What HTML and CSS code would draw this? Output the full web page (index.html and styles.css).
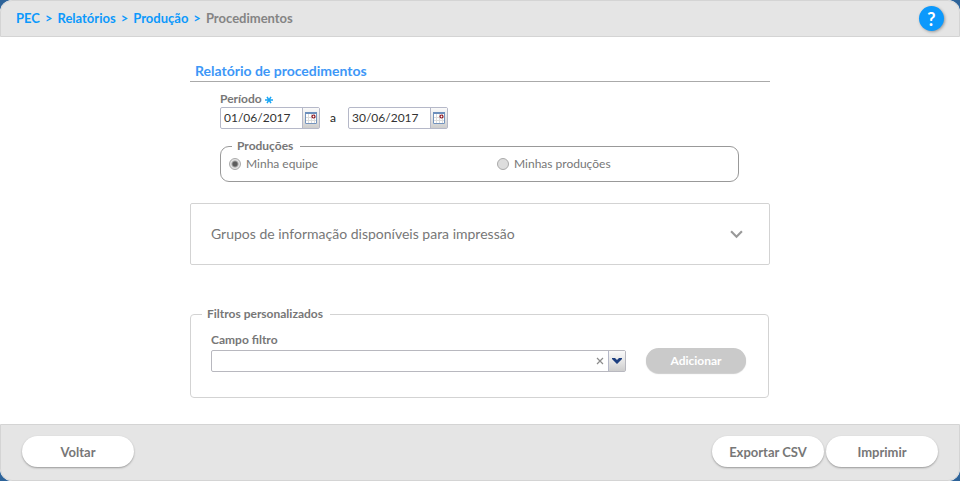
FILE: index.html
```html
<!DOCTYPE html>
<html lang="pt-BR">
<head>
<meta charset="utf-8">
<meta name="viewport" content="width=device-width, initial-scale=1">
<title>Relatório de procedimentos</title>
<link rel="stylesheet" href="styles.css">
</head>
<body>
<div class="window">
  <header class="topbar">
    <nav class="breadcrumb" aria-label="Navegação">
      <a href="#">PEC</a><span class="sep">&gt;</span><a href="#">Relatórios</a><span class="sep">&gt;</span><a href="#">Produção</a><span class="sep">&gt;</span><span class="current">Procedimentos</span>
    </nav>
    <button class="help" type="button" aria-label="Ajuda">?</button>
  </header>

  <main class="content">
    <h1 class="title">Relatório de procedimentos</h1>

    <section class="params">
      <label class="label" for="start">Período
        <svg class="required" viewBox="0 0 8 8" aria-hidden="true"><path d="M0 4h8M2 .8l4 6.400M6 .8L2 7.200"/></svg>
      </label>
      <div class="period">
        <div class="date">
          <input id="start" type="text" value="01/06/2017">
          <button type="button" aria-label="Abrir calendário inicial">
            <svg viewBox="0 0 14 14" aria-hidden="true"><path fill="#fff" d="M1 1h12v12H1z"/><path fill="none" stroke="#dcdcdc" d="M1 6.500h11M1 9.500h11M4.500 3v9M7.500 3v9M10.500 3v9"/><path fill="none" stroke="#7594bd" d="M1.500 12.500v-11h11v11z"/><path fill="#6d8fbc" d="M1 1h12v2H1z"/><circle cx="9.500" cy="5.500" r="1.500" fill="#fff" stroke="#8b0f1a" stroke-width="1.200"/></svg>
          </button>
        </div>
        <label class="to" for="end">a</label>
        <div class="date">
          <input id="end" type="text" value="30/06/2017">
          <button type="button" aria-label="Abrir calendário final">
            <svg viewBox="0 0 14 14" aria-hidden="true"><path fill="#fff" d="M1 1h12v12H1z"/><path fill="none" stroke="#dcdcdc" d="M1 6.500h11M1 9.500h11M4.500 3v9M7.500 3v9M10.500 3v9"/><path fill="none" stroke="#7594bd" d="M1.500 12.500v-11h11v11z"/><path fill="#6d8fbc" d="M1 1h12v2H1z"/><circle cx="9.500" cy="5.500" r="1.500" fill="#fff" stroke="#8b0f1a" stroke-width="1.200"/></svg>
          </button>
        </div>
      </div>

      <fieldset class="group group-dark">
        <legend>Produções</legend>
        <div class="options">
          <label class="option"><input type="radio" name="producoes" checked>Minha equipe</label>
          <label class="option"><input type="radio" name="producoes">Minhas produções</label>
        </div>
      </fieldset>
    </section>

    <button class="accordion" type="button" aria-expanded="false">
      <span>Grupos de informação disponíveis para impressão</span>
      <svg viewBox="0 0 12 8" aria-hidden="true"><path d="M1 1l5 5 5-5"/></svg>
    </button>

    <fieldset class="group group-light">
      <legend>Filtros personalizados</legend>
      <label class="label" for="field">Campo filtro</label>
      <div class="filter">
        <div class="combo">
          <select id="field"><option value="" selected></option></select>
          <button class="clear" type="button" aria-label="Limpar"><svg viewBox="0 0 8 8" aria-hidden="true"><path d="M1 1l6 6M7 1L1 7"/></svg></button>
          <span class="arrow"><svg viewBox="0 0 10 6" aria-hidden="true"><path d="M0 0h3l2 2 2-2h3v1L5 6 0 1z"/></svg></span>
        </div>
        <button class="add" type="button" disabled>Adicionar</button>
      </div>
    </fieldset>
  </main>

  <footer class="actions">
    <button class="pill" type="button">Voltar</button>
    <div class="actions-end">
      <button class="pill" type="button">Exportar CSV</button>
      <button class="pill" type="button">Imprimir</button>
    </div>
  </footer>
</div>
</body>
</html>
```
FILE: styles.css
```css
* { box-sizing: border-box; }

body {
  margin: 0;
  background: #2d6399;
  color: #777;
  font: 12px/16px Lato, "Liberation Sans", sans-serif;
}

button, input, select { font: inherit; color: inherit; }
button { padding: 0; cursor: pointer; }

.window {
  display: flex;
  flex-direction: column;
  min-height: 100vh;
  overflow: hidden;
  border-radius: 12px;
  background: #fff;
}

.topbar {
  display: flex;
  align-items: center;
  justify-content: space-between;
  padding: 5px 15px;
  border: 1px solid #d4d4d4;
  border-radius: 12px 12px 0 0;
  background: #e5e5e5;
}

.breadcrumb { padding-bottom: 2px; font-size: 13px; font-weight: 700; }
.breadcrumb a, .sep { color: #0c99fc; text-decoration: none; }
.sep { margin: 0 5px; }
.current { color: #848484; }

.help {
  width: 25px;
  height: 25px;
  border: 0;
  border-radius: 50%;
  background: #0c99fc;
  box-shadow: 1px 1px 3px #999;
  color: #fff;
  font-size: 18px;
  font-weight: 700;
}

.content {
  flex: 1;
  width: 100%;
  max-width: 580px;
  margin: 0 auto;
  padding: 25px 0;
}

.title {
  margin: 0;
  padding: 0 5px 2px;
  border-bottom: 1px solid #aaa;
  color: #3d97f7;
  font-size: 14px;
  font-weight: 700;
  line-height: 17px;
}

.params { padding: 9px 31px 0 30px; }
.label { display: block; font-weight: 700; }
.required { width: 8px; height: 8px; margin-bottom: -1px; fill: none; stroke: #18a5f5; stroke-width: 1.500; }

.period { display: flex; align-items: center; gap: 10px; }

.date {
  display: flex;
  width: 100px;
  height: 22px;
  border: 1px solid #b5b8c8;
  border-radius: 2px;
}
.date input {
  flex: 1;
  min-width: 0;
  padding: 0 3px;
  border: 0;
  background: none;
  color: #333;
}
.date button, .arrow {
  display: flex;
  align-items: center;
  justify-content: center;
  width: 17px;
  border: 0;
  border-left: 1px solid #b5b8c8;
  background: linear-gradient(#fafafa, #e6e6e6 50%, #cdcdcd);
}
.date svg { flex: none; width: 14px; height: 14px; }
.to { width: 8px; color: #222; }

.group {
  min-width: 0;
  margin: 0;
  border: 1px solid;
}
.group legend {
  padding: 0 5px;
  color: #777;
  font-weight: 700;
}
.group-dark { margin-top: 9px; padding: 2px 8px 9px; border-color: #999; border-radius: 9px; }
.group-dark legend { margin-left: 3px; padding: 0 7px 0 5px; }

.options { display: grid; grid-template-columns: 268px 1fr; }
.option { display: flex; align-items: center; gap: 5px; }
.option input {
  appearance: none;
  width: 12px;
  height: 12px;
  margin: 0;
  border: 1px solid #aaa;
  border-radius: 50%;
  background: #ddd;
}
.option input:checked { background: radial-gradient(circle, #5c5c5c 2px, #e4e4e4 4px); }

.accordion {
  display: flex;
  align-items: center;
  justify-content: space-between;
  width: 100%;
  margin: 21px 0 41px;
  padding: 20px 26px 20px 20px;
  border: 1px solid #d3d3d3;
  border-radius: 2px;
  background: #fff;
  font-size: 14px;
  line-height: 20px;
  text-align: left;
}
.accordion svg { width: 13px; height: 9px; fill: none; stroke: #999; stroke-width: 2; }

.group-light { margin-right: 1px; padding: 10px 20px 24px; border-color: #d3d3d3; border-radius: 4px; }
.group-light legend { margin-left: -9px; padding: 0 7px 0 5px; }

.filter { display: flex; align-items: center; gap: 20px; }
.combo {
  position: relative;
  display: flex;
  flex: 1;
  max-width: 415px;
  height: 22px;
  border: 1px solid #b8b8bf;
  border-radius: 2px;
}
.combo select {
  appearance: none;
  flex: 1;
  width: 100%;
  border: 0;
  background: none;
}
.clear {
  position: absolute;
  top: 6px;
  right: 21px;
  width: 8px;
  height: 8px;
  border: 0;
  background: none;
}
.clear svg { display: block; width: 8px; height: 8px; stroke: #8c8c8c; stroke-width: 1.200; }
.arrow { position: absolute; top: 0; right: 0; bottom: 0; pointer-events: none; }
.arrow svg { width: 10px; height: 6px; fill: #1d3f80; }

.add {
  width: 100px;
  height: 25px;
  border: 0;
  border-radius: 13px;
  background: #cacaca;
  box-shadow: 0 1px 1px #ccc;
  color: #fff;
  font-weight: 700;
}

.actions {
  display: flex;
  justify-content: space-between;
  padding: 11px 21px 13px;
  border: 1px solid #d4d4d4;
  border-radius: 0 0 12px 12px;
  background: #e5e5e5;
}
.actions-end { display: flex; gap: 2px; }
.pill {
  width: 112px;
  height: 31px;
  border: 0;
  border-radius: 16px;
  background: #fff;
  box-shadow: 0 1px 2px #999;
  font-size: 13px;
  font-weight: 700;
}
```
